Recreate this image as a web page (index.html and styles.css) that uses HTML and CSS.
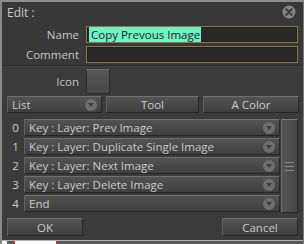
FILE: index.html
```html
<!DOCTYPE html>
<html>
<head>
<meta charset="utf-8">
<link rel="stylesheet" href="styles.css">
</head>
<body>
<div class="dialog">
  <div class="titlebar">
    <span class="title">Edit :</span>
    <span class="close"><svg width="14" height="14" viewBox="0 0 14 14"><circle cx="7" cy="7" r="6.5" fill="#858585"/><path d="M4.3 4.3 L9.7 9.7 M9.7 4.3 L4.3 9.7" stroke="#3a3a3a" stroke-width="2.2" stroke-linecap="round"/></svg></span>
  </div>
  <div class="top">
    <div class="field">
      <label class="lbl">Name</label>
      <div class="input"><span class="sel">Copy Prevous Image</span></div>
    </div>
    <div class="field">
      <label class="lbl">Comment</label>
      <div class="input"></div>
    </div>
  </div>
  <div class="main">
    <div class="field icon-row">
      <label class="lbl">Icon</label>
      <div class="iconbox"></div>
    </div>
    <div class="btnrow">
      <div class="btn combo">List<span class="arrow"></span></div>
      <div class="btn">Tool</div>
      <div class="btn">A Color</div>
    </div>
    <div class="listarea">
      <div class="list">
        <div class="item"><span class="num">0</span><div class="combo btn">Key : Layer: Prev Image<span class="arrow"></span></div></div>
        <div class="item"><span class="num">1</span><div class="combo btn">Key : Layer: Duplicate Single Image<span class="arrow"></span></div></div>
        <div class="item"><span class="num">2</span><div class="combo btn">Key : Layer: Next Image<span class="arrow"></span></div></div>
        <div class="item"><span class="num">3</span><div class="combo btn">Key : Layer: Delete Image<span class="arrow"></span></div></div>
        <div class="item"><span class="num">4</span><div class="combo btn">End<span class="arrow"></span></div></div>
      </div>
      <div class="scroll"><div class="thumb"><span class="grip"></span></div></div>
    </div>
    <div class="footer">
      <div class="btn fbtn">OK</div>
      <div class="btn fbtn">Cancel</div>
    </div>
  </div>
  <div class="below"><span class="w1"></span><span class="w2"></span></div>
</div>
</body>
</html>
```
FILE: styles.css
```css
html, body { margin: 0; padding: 0; background: #3a3a3a; }
body { font-family: "Open Sans", "Noto Sans", sans-serif; font-size: 11.5px; color: #cbcbcb; }
.dialog {
  width: 304px; height: 244px; box-sizing: border-box;
  border-top: 2px solid #8e8e8e; border-left: 2px solid #8a8a8a; border-right: 1px solid #7a7a7a;
  display: flex; flex-direction: column; background: #3b3b3b; overflow: hidden;
}
.titlebar { height: 22px; display: flex; align-items: center; justify-content: space-between; padding: 0 7px 0 5px; background: #383838; }
.title { font-size: 12px; color: #cbcbcb; margin-top: -2px; }
.close { display: flex; margin-top: -3px; }
.top { background: #383838; padding: 2px 5px 2px 0; display: flex; flex-direction: column; gap: 3px; border-bottom: 1px solid #2b2b2b; }
.field { display: grid; grid-template-columns: 77px 1fr; column-gap: 7px; align-items: center; }
.lbl { text-align: right; font-size: 11.5px; color: #c6c6c6; }
.input {
  height: 17px; box-sizing: border-box; border: 1px solid #8d7652; background: #282828;
  box-shadow: inset 0 0 0 1px #1f1f1f; padding: 1px 2px; display: flex; align-items: center;
}
.sel { background: #6ff2c5; color: #1d1d1d; font-size: 11.5px; line-height: 15px; padding: 0 1px 0 2px; }
.main { flex: 1; display: flex; flex-direction: column; padding: 2px 5px 0 5px; border-top: 1px solid #444; }
.icon-row { margin-left: -5px; grid-template-columns: 77px 24px; }
.iconbox { height: 25px; box-sizing: border-box; border: 1px solid #2a2a2a; border-top-color: #6a6a6a; background: linear-gradient(#575757, #474747); }
.btnrow { display: grid; grid-template-columns: 95px 93px 96px; column-gap: 4px; margin-top: 2px; }
.btn {
  height: 17px; box-sizing: border-box; border: 1px solid #262626; border-top-color: #707070; border-left-color: #606060;
  background: linear-gradient(#535353, #3f3f3f); display: flex; align-items: center; justify-content: center;
  color: #cbcbcb; font-size: 11.5px; position: relative;
}
.combo { justify-content: flex-start; padding-left: 4px; }
.arrow { position: absolute; right: 4px; top: 2px; width: 12px; height: 12px; border-radius: 50%; background: #6e6e6e; }
.arrow::after { content: ""; position: absolute; left: 3px; top: 4px; border-left: 3px solid transparent; border-right: 3px solid transparent; border-top: 4px solid #3d3d3d; }
.listarea { display: flex; margin-top: 6px; gap: 1px; }
.list { display: flex; flex-direction: column; gap: 2px; width: 274px; }
.item { display: grid; grid-template-columns: 17px 1fr; align-items: center; }
.num { text-align: center; font-size: 11.5px; color: #cbcbcb; }
.scroll { width: 17px; height: 94px; box-sizing: border-box; background: #2c2c2c; }
.thumb { height: 100%; box-sizing: border-box; border: 1px solid #252525; border-top-color: #7a7a7a; border-left-color: #6a6a6a; background: linear-gradient(90deg, #555, #474747); display: flex; align-items: center; justify-content: center; }
.grip { width: 9px; height: 7px; border-top: 1px solid #8a8a8a; border-bottom: 1px solid #8a8a8a; position: relative; }
.grip::after { content: ""; position: absolute; left: 0; right: 0; top: 3px; border-top: 1px solid #8a8a8a; }
.footer { display: flex; justify-content: space-between; margin-top: 5px; }
.fbtn { height: 18px; width: 76px; }
.below { height: 3px; background: #5a5a5a; border-top: 1px solid #b0b0b0; display: flex; margin-left: -2px; }
.w1 { width: 7px; background: #fff; }
.w2 { width: 41px; margin-left: 7px; background: #fff; border-left: 1px solid #d03030; border-right: 1px solid #d03030; }
```
